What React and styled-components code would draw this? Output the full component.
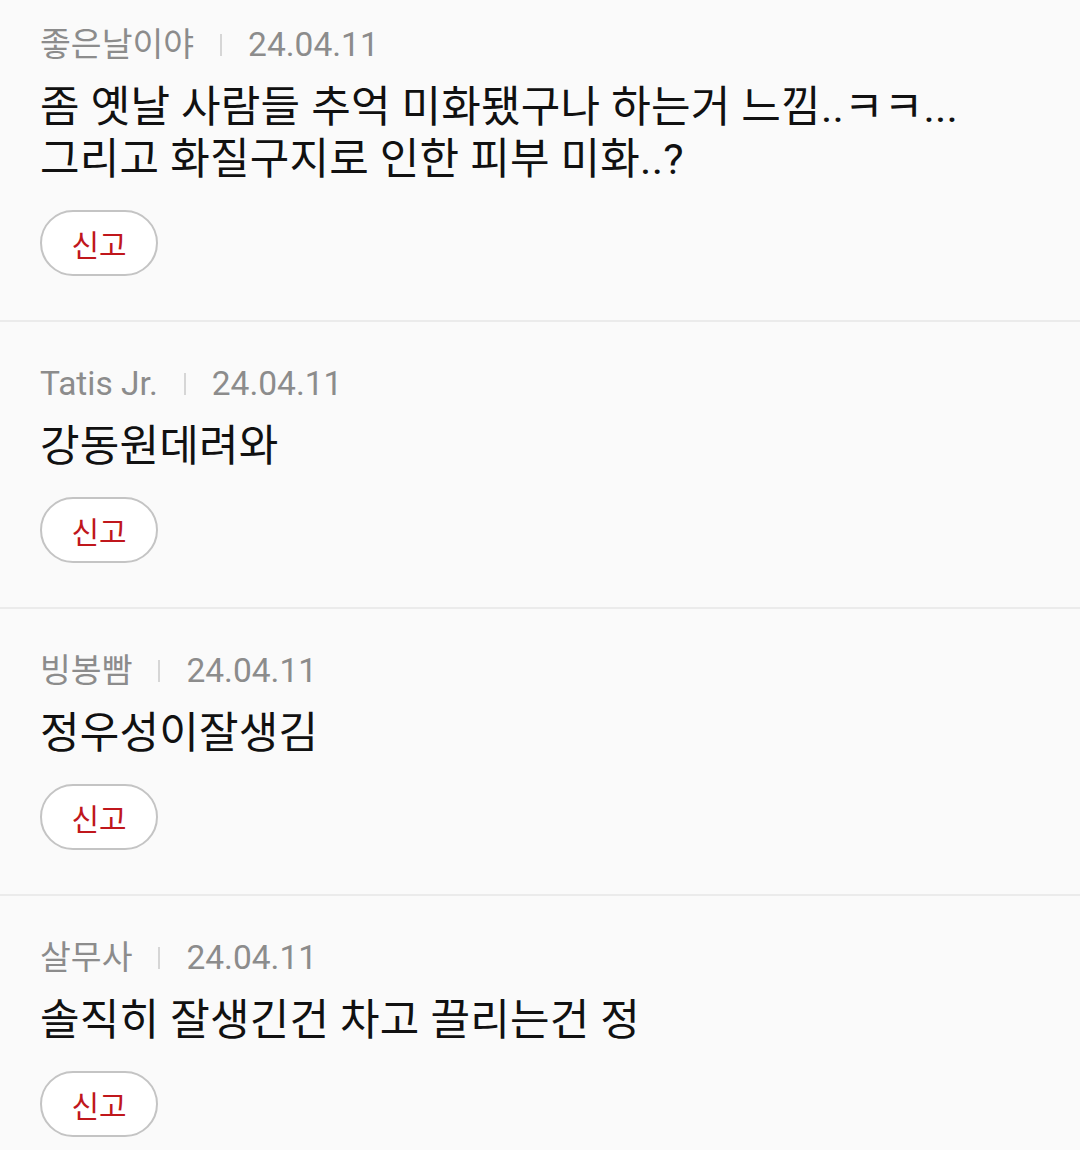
import React from "react";
import styled, { createGlobalStyle } from "styled-components";

const Global = createGlobalStyle`
  html, body { margin: 0; padding: 0; background: #fafafa; }
  body { font-family: Roboto, "Noto Sans CJK KR", sans-serif; -webkit-font-smoothing: antialiased; }
`;

const List = styled.div`
  display: flex;
  flex-direction: column;
  margin-top: -17px;
`;

const Item = styled.section`
  display: flex;
  flex-direction: column;
  align-items: flex-start;
  padding: 42px 40px 44px;
  border-bottom: 2px solid #ebebeb;
  background: #fafafa;
`;

const Meta = styled.div`
  display: flex;
  align-items: center;
  gap: 26px;
  font-size: 33.5px;
  line-height: 40px;
  color: #8c8c8c;
`;

const Bar = styled.span`
  width: 2px;
  height: 22px;
  background: #d6d6d6;
`;

const Body = styled.p`
  margin: 16px 0 0;
  font-size: 43px;
  line-height: 52px;
  letter-spacing: 0.2px;
  color: #111;
`;

const ReportButton = styled.button`
  margin-top: 25px;
  width: 118px;
  height: 66px;
  border-radius: 33px;
  border: 2px solid #c4c4c4;
  background: #fff;
  color: #c0171c;
  font-family: Roboto, "Noto Sans CJK KR", sans-serif;
  font-size: 30px;
  padding: 0;
`;

const comments = [
  { name: "좋은날이야", date: "24.04.11", lines: ["좀 옛날 사람들 추억 미화됐구나 하는거 느낌..ㅋㅋ...", "그리고 화질구지로 인한 피부 미화..?"] },
  { name: "Tatis Jr.", date: "24.04.11", lines: ["강동원데려와"] },
  { name: "빙봉빰", date: "24.04.11", lines: ["정우성이잘생김"] },
  { name: "살무사", date: "24.04.11", lines: ["솔직히 잘생긴건 차고 끌리는건 정"] },
];

export default function App() {
  return (
    <>
      <Global />
      <List>
        {comments.map((c, i) => (
          <Item key={i}>
            <Meta>
              <span>{c.name}</span>
              <Bar />
              <span>{c.date}</span>
            </Meta>
            <Body>
              {c.lines.map((l, j) => (
                <React.Fragment key={j}>
                  {j > 0 && <br />}
                  {l}
                </React.Fragment>
              ))}
            </Body>
            <ReportButton>신고</ReportButton>
          </Item>
        ))}
      </List>
    </>
  );
}
